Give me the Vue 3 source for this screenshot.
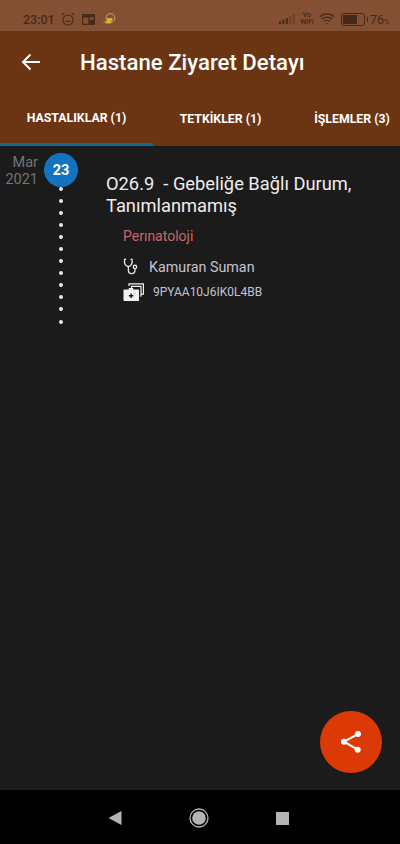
<script setup>
const dots = Array.from({ length: 12 })
</script>

<template>
  <div class="screen">
    <div class="statusbar">
      <span class="time">23:01</span>
      <svg class="st-icon" width="14" height="14" viewBox="0 0 14 14" fill="none" stroke="#4a2a18" stroke-width="1.1">
        <circle cx="7" cy="8" r="5" />
        <path d="M1 3.2 3.2 1M13 3.2 10.8 1M4.8 8.6c.8 1.2 3.6 1.2 4.4 0" />
      </svg>
      <svg class="st-icon" width="13" height="11" viewBox="0 0 13 11">
        <path fill="#4a2a18" d="M0 0h13v11H0z" />
        <path fill="#835033" d="M1.2 3.4h5.2v6.4H1.2zM7.6 3.4h4.2v2.4H7.6z" />
      </svg>
      <svg class="st-icon" width="14" height="12" viewBox="0 0 14 12">
        <circle cx="8.5" cy="5" r="4.4" fill="none" stroke="#c9a268" stroke-width="1" />
        <path fill="#e3ad3e" d="M0 8.500c2 .8 4 .2 5.200-1.200V5h4.600c.8 0 1.200.8.800 1.600C10 8 9 9 8 9.500l1.500 1H3.500l.8-1C3 9.800 1.200 9.500 0 8.500z" />
      </svg>
      <span class="st-space"></span>
      <svg width="16" height="10" viewBox="0 0 16 10">
        <path fill="#4a2a18" d="M0 7h2v3H0zM3.400 5.500h2V10h-2zM6.800 4h2v6h-2z" />
        <path fill="#6b4129" d="M10.200 2h2v8h-2zM13.600 0h2v10h-2z" />
      </svg>
      <span class="vowifi">Vo<br />WiFi</span>
      <svg width="16" height="12" viewBox="0 0 16 12" fill="none" stroke="#4a2a18" stroke-width="1.300">
        <path d="M.8 4a10 10 0 0 1 14.400 0M3 6.300a7 7 0 0 1 10 0M5.200 8.500a4 4 0 0 1 5.600 0" />
        <circle cx="8" cy="10.600" r=".8" fill="#4a2a18" stroke="none" />
      </svg>
      <div class="battery"><div class="battery-fill"></div></div>
      <span class="batt-text">76<small>%</small></span>
    </div>

    <header class="appbar">
      <div class="toolbar">
        <svg class="back" width="20" height="18" viewBox="0 0 20 18" fill="none" stroke="#fff" stroke-width="2">
          <path d="M19 9H2M9.500 1.500 2 9l7.500 7.500" />
        </svg>
        <h1>Hastane Ziyaret Detayı</h1>
      </div>
      <nav class="tabs">
        <div class="tab active">HASTALIKLAR (1)</div>
        <div class="tab">TETKİKLER (1)</div>
        <div class="tab">İŞLEMLER (3)</div>
      </nav>
    </header>

    <main class="content">
      <div class="row">
        <div class="date">
          <span>Mar</span>
          <span>2021</span>
        </div>
        <div class="timeline">
          <div class="day">23</div>
          <div class="dots">
            <i v-for="(d, i) in dots" :key="i"></i>
          </div>
        </div>
        <section class="card">
          <h2>O26.9&nbsp; - Gebeliğe Bağlı Durum, Tanımlanmamış</h2>
          <div class="dept">Perınatoloji</div>
          <div class="line">
            <svg width="17" height="17" viewBox="0 0 19 19" fill="none" stroke="#e6e6ee" stroke-width="1.500">
              <path d="M3.500 1.500H1.800c-.5 3 .2 6 2.300 7.400 1.200.8 2.600.8 3.700 0 2-1.400 2.700-4.400 2.300-7.400H8.400" />
              <path d="M6 9.500v3.500c0 2.600 1.600 4.400 3.700 4.400s3.700-1.700 3.700-4v-1.400" />
              <circle cx="13.400" cy="10" r="1.900" />
            </svg>
            <span class="doctor">Kamuran Suman</span>
          </div>
          <div class="line code-line">
            <svg width="21" height="18" viewBox="0 0 21 18">
              <path fill="none" stroke="#f0f0f0" stroke-width="1.200" d="M6 3V.8h14.400v10.400H18.500M8.500 5.500V3.300h9.500v9.700h-1" />
              <path fill="#f0f0f0" d="M1.500 6.500h4.300V5h4.400v1.500H15c.6 0 1 .4 1 1V17c0 .6-.4 1-1 1H1.500c-.6 0-1-.4-1-1V7.500c0-.6.400-1 1-1z" />
              <path fill="#1b1b1b" d="M7.400 10.500h1.500v1.500h1.500v1.500H8.900V15H7.400v-1.500H5.900V12h1.500z" />
            </svg>
            <span class="code">9PYAA10J6IK0L4BB</span>
          </div>
        </section>
      </div>

      <button class="fab" type="button" aria-label="Paylaş">
        <svg width="24" height="24" viewBox="0 0 24 24" fill="#fff" stroke="#fff">
          <path fill="none" stroke-width="2" d="M19 4 5 11.700l13.700 8" />
          <circle cx="5" cy="11.700" r="3" stroke="none" />
          <circle cx="19" cy="4" r="3" stroke="none" />
          <circle cx="18.700" cy="19.700" r="3" stroke="none" />
        </svg>
      </button>
    </main>

    <footer class="navbar">
      <svg width="14" height="14" viewBox="0 0 14 14"><path fill="#b4b4b4" d="M13.500 0v14L.500 7z" /></svg>
      <svg width="20" height="20" viewBox="0 0 20 20">
        <circle cx="10" cy="10" r="9" fill="none" stroke="#b4b4b4" stroke-width="1.300" />
        <circle cx="10" cy="10" r="6.800" fill="#b4b4b4" />
      </svg>
      <svg width="13" height="13" viewBox="0 0 13 13"><path fill="#b4b4b4" d="M0 0h13v13H0z" /></svg>
    </footer>
  </div>
</template>

<style scoped>
.screen {
  width: 400px;
  height: 844px;
  display: flex;
  flex-direction: column;
  overflow: hidden;
  background: #1b1b1b;
  font-family: Roboto, "Liberation Sans", sans-serif;
}

.statusbar {
  height: 31px;
  flex: none;
  display: flex;
  align-items: center;
  gap: 7px;
  padding: 7px 11px 0 23px;
  box-sizing: border-box;
  background: #835033;
  color: #46281a;
}
.time {
  width: 31px;
  font-size: 12.500px;
  font-weight: 500;
}
.st-space {
  flex: 1;
}
.vowifi {
  width: 14px;
  margin-left: -2px;
  font-size: 7px;
  line-height: 7px;
  text-align: center;
  font-weight: 500;
  white-space: nowrap;
}
.statusbar .vowifi + svg {
  margin-left: -2px;
}
.battery {
  position: relative;
  width: 20px;
  height: 9px;
  margin-left: -1px;
  margin-right: 1px;
  padding: 1px;
  border: 1.200px solid #46281a;
  border-radius: 3px;
  box-sizing: content-box;
}
.battery::after {
  content: "";
  position: absolute;
  right: -4px;
  top: 3px;
  width: 1.500px;
  height: 5px;
  background: #46281a;
}
.battery-fill {
  width: 72%;
  height: 100%;
  background: #46281a;
  border-radius: 1px;
}
.batt-text {
  width: 19px;
  margin-left: -3px;
  font-size: 12.500px;
  white-space: nowrap;
}
.batt-text small {
  font-size: 7px;
}

.appbar {
  flex: none;
  height: 115px;
  display: flex;
  flex-direction: column;
  background: #6b3413;
  color: #fff;
}
.toolbar {
  height: 62px;
  display: flex;
  align-items: center;
  padding-left: 21px;
}
.back {
  flex: none;
}
.toolbar h1 {
  margin: 0 0 0 39px;
  font-size: 22.200px;
  font-weight: 500;
  white-space: nowrap;
}
.tabs {
  flex: 1;
  display: grid;
  grid-template-columns: 153px 135px 128px;
}
.tab {
  display: flex;
  align-items: center;
  justify-content: center;
  padding-bottom: 1px;
  font-size: 12.300px;
  font-weight: 700;
  white-space: nowrap;
  box-sizing: border-box;
}
.tab.active {
  border-bottom: 3px solid #0d6a94;
  padding-bottom: 0;
}

.content {
  flex: 1;
  position: relative;
}
.row {
  display: flex;
  align-items: flex-start;
  padding-top: 6px;
}
.date {
  width: 38px;
  flex: none;
  margin-top: 2px;
  display: flex;
  flex-direction: column;
  align-items: flex-end;
  font-size: 14.500px;
  line-height: 17px;
  color: #747474;
}
.timeline {
  width: 34px;
  margin-left: 6px;
  flex: none;
  display: flex;
  flex-direction: column;
  align-items: center;
  margin-top: 1px;
}
.day {
  width: 34px;
  height: 34px;
  border-radius: 50%;
  background: #1273c1;
  color: #fff;
  display: flex;
  align-items: center;
  justify-content: center;
  font-size: 14.500px;
  font-weight: 700;
}
.dots {
  display: flex;
  flex-direction: column;
  gap: 8.050px;
}
.dots i {
  display: block;
  width: 4px;
  height: 4px;
  border-radius: 50%;
  background: #e8e8e8;
}
.card {
  flex: 1;
  margin-left: 28px;
  padding: 21px 20px 0 0;
}
.card h2 {
  margin: 0;
  font-size: 18.300px;
  line-height: 22px;
  font-weight: 400;
  color: #ededed;
}
.dept {
  margin: 11px 0 0 17px;
  font-size: 14px;
  line-height: 17px;
  color: #c9666a;
}
.line {
  display: flex;
  align-items: center;
  margin: 12px 0 0 17px;
  height: 19px;
}
.code-line {
  margin-top: 6px;
}
.doctor {
  margin-left: 9px;
  font-size: 14.300px;
  color: #c3c3d3;
}
.code {
  margin-left: 9px;
  font-size: 12px;
  color: #c3c3d3;
}
.fab {
  position: absolute;
  right: 18px;
  bottom: 17px;
  width: 62px;
  height: 62px;
  padding: 0;
  border: none;
  border-radius: 50%;
  background: #db3a07;
  display: flex;
  align-items: center;
  justify-content: center;
}

.navbar {
  flex: none;
  height: 54px;
  padding: 2px 0 0 108px;
  box-sizing: border-box;
  display: flex;
  align-items: center;
  gap: 67px;
  background: #000;
}
</style>
